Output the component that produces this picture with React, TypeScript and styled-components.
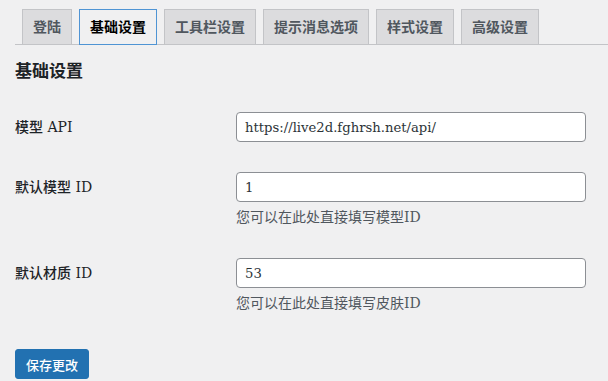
import * as React from 'react';
import styled, { createGlobalStyle } from 'styled-components';

const GlobalStyle = createGlobalStyle`
  html, body {
    margin: 0;
    padding: 0;
    background: #f0f0f1;
  }
  body {
    font-family: "DejaVu Serif", "Noto Sans CJK SC", serif;
    color: #1d2327;
    font-size: 14px;
  }
`;

const Page = styled.div`
  padding: 0 0 0 15px;
`;

const TabBar = styled.nav`
  display: flex;
  gap: 7px;
  padding: 9px 0 0 7px;
  border-bottom: 1px solid #c3c4c7;
`;

const Tab = styled.a<{ $active?: boolean }>`
  display: block;
  margin-bottom: -1px;
  padding: 5px 10px;
  line-height: 24px;
  font-family: "Liberation Sans", "Noto Sans CJK SC", sans-serif;
  font-size: 14px;
  font-weight: 600;
  text-decoration: none;
  border: 1px solid ${(p) => (p.$active ? '#4f94d4' : '#c3c4c7')};
  background: ${(p) => (p.$active ? '#f0f0f1' : '#dcdcde')};
  color: ${(p) => (p.$active ? '#000' : '#50575e')};
`;

const Heading = styled.h2`
  margin: 14px 0 14px;
  font-size: 17px;
  line-height: 24px;
  font-weight: 600;
  color: #1d2327;
`;

const FormRow = styled.div`
  display: grid;
  grid-template-columns: 221px 350px;
  padding: 15px 0;
`;

const Label = styled.label`
  line-height: 30px;
  font-weight: 500;
  color: #1d2327;
`;

const Field = styled.div`
  display: flex;
  flex-direction: column;
`;

const TextInput = styled.input`
  box-sizing: border-box;
  width: 350px;
  height: 30px;
  padding: 0 8px;
  font-family: "DejaVu Serif", "Noto Sans CJK SC", serif;
  font-size: 13.2px;
  color: #2c3338;
  background: #fff;
  border: 1px solid #8c8f94;
  border-radius: 4px;
  outline: none;
`;

const Description = styled.p`
  margin: 5px 0 0;
  line-height: 21px;
  color: #50575e;
`;

const SubmitButton = styled.button`
  margin-top: 20px;
  height: 30px;
  padding: 0 10px;
  font-family: "Liberation Sans", "Noto Sans CJK SC", sans-serif;
  font-size: 13px;
  font-weight: 500;
  color: #fff;
  background: #2271b1;
  border: 1px solid #2271b1;
  border-radius: 3px;
`;

const tabs = ['登陆', '基础设置', '工具栏设置', '提示消息选项', '样式设置', '高级设置'];

const rows = [
  { label: '模型 API', value: 'https://live2d.fghrsh.net/api/' },
  { label: '默认模型 ID', value: '1', hint: '您可以在此处直接填写模型ID' },
  { label: '默认材质 ID', value: '53', hint: '您可以在此处直接填写皮肤ID' },
];

export default function App() {
  return (
    <Page>
      <GlobalStyle />
      <TabBar>
        {tabs.map((t) => (
          <Tab key={t} $active={t === '基础设置'}>
            {t}
          </Tab>
        ))}
      </TabBar>
      <Heading>基础设置</Heading>
      {rows.map((r) => (
        <FormRow key={r.label}>
          <Label>{r.label}</Label>
          <Field>
            <TextInput defaultValue={r.value} />
            {r.hint && <Description>{r.hint}</Description>}
          </Field>
        </FormRow>
      ))}
      <SubmitButton>保存更改</SubmitButton>
    </Page>
  );
}
